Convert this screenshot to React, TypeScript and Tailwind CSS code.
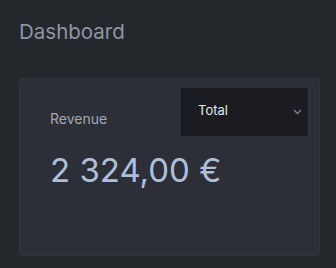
import React from "react";

export default function App() {
  return (
    <div
      className="w-[336px] h-[268px] bg-[#24272c] pl-[19px] pr-[16px] pt-[19px] overflow-hidden"
      style={{ fontFamily: "Inter, Lato, sans-serif" }}
    >
      <h1 className="text-[20.5px] leading-[25px] text-[#8c96a3] font-normal">Dashboard</h1>
      <div className="mt-[34px] h-[178px] rounded-[4px] bg-[#2c2f38] border border-[#30343f] relative">
        <div className="pl-[30px] pt-[31px]">
          <div className="text-[14px] leading-[18px] text-[#a3a8b1]">Revenue</div>
          <div className="mt-[22px] text-[33px] leading-[40px] text-[#afbfd5]">2 324,00 €</div>
        </div>
        <div className="absolute right-[9px] top-[9px] w-[129px] h-[48px] bg-[#1b1c21] border-r-2 border-[#2e323b] flex items-center pl-[17px] pr-[6px]">
          <span className="text-[13px] text-[#e4e6ea] flex-1 -mt-[2px]">Total</span>
          <svg width="9" height="6" viewBox="0 0 9 6" className="-mt-[1px]">
            <path d="M1 1 L4.5 4.5 L8 1" stroke="#7b808a" strokeWidth="1.4" fill="none" />
          </svg>
        </div>
      </div>
    </div>
  );
}
